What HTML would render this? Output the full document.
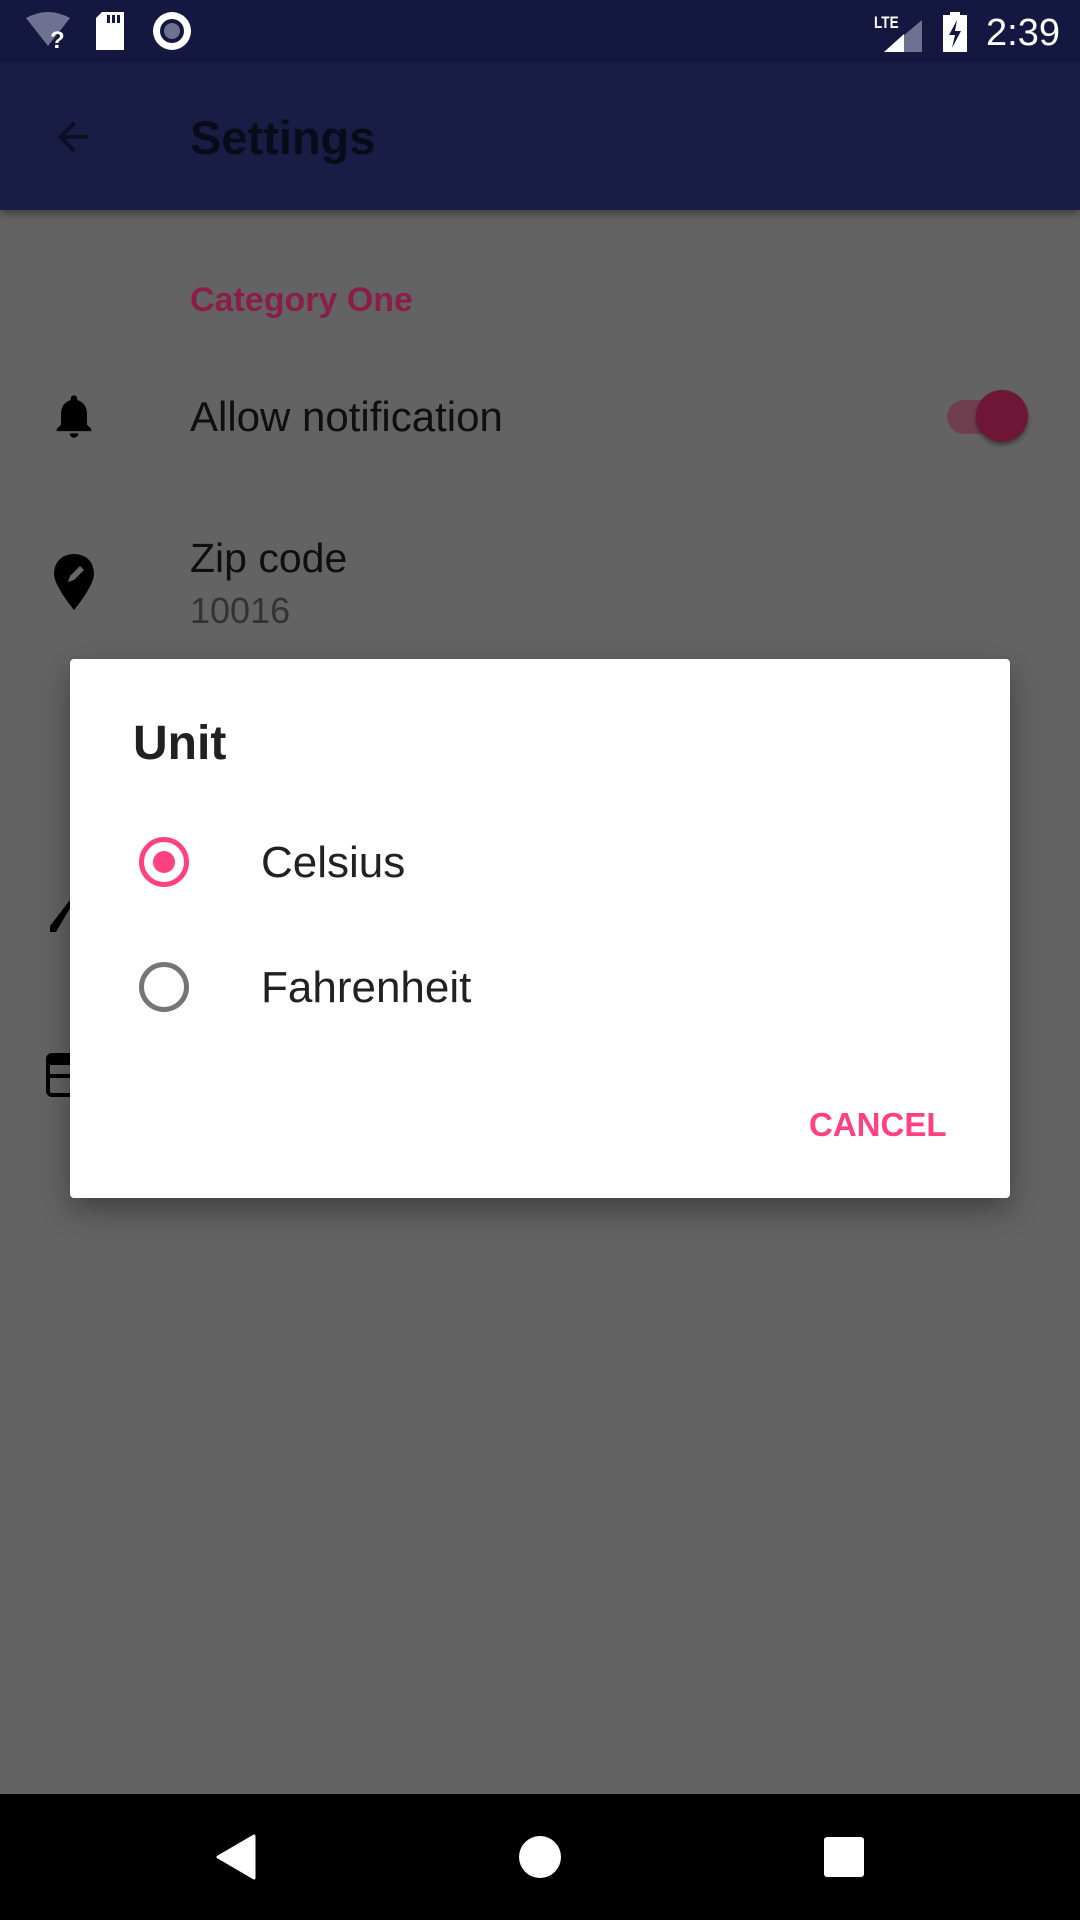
<!DOCTYPE html>
<html><head><meta charset="utf-8"><style>
*{margin:0;padding:0;box-sizing:border-box}
body{width:1080px;height:1920px;position:relative;overflow:hidden;background:#636363;font-family:"Liberation Sans",sans-serif}
.abs{position:absolute}
.t{position:absolute;white-space:nowrap;line-height:1}
</style></head><body>
<div class="abs" style="left:0;top:0;width:1080px;height:62px;background:#141841"></div>
<div class="abs" style="left:0;top:62px;width:1080px;height:148px;background:#191d45;box-shadow:0 4px 8px rgba(0,0,0,.35)"></div>
<svg class="abs" style="left:24px;top:12px" width="50" height="40" viewBox="0 0 50 40"><path d="M2 6 Q24 -6 46 6 L24 34 Z" fill="#6e7190"/><text x="26" y="36" font-size="24" fill="#fff" font-family="Liberation Sans" font-weight="bold">?</text></svg>
<svg class="abs" style="left:94px;top:12px" width="32" height="38"><path d="M8 0 H30 V38 H2 V6 Z" fill="#fff"/><rect x="13" y="3" width="3" height="8" fill="#141841"/><rect x="18" y="3" width="3" height="8" fill="#141841"/><rect x="23" y="3" width="3" height="8" fill="#141841"/></svg>
<svg class="abs" style="left:152px;top:11px" width="40" height="40"><circle cx="20" cy="20" r="19" fill="#fff"/><circle cx="20" cy="20" r="12" fill="#141841"/><circle cx="20" cy="20" r="8" fill="#6e7190"/></svg>
<div class="t" style="left:874px;top:14px;font-size:17px;color:#fff;font-weight:bold;transform:scaleX(.8);transform-origin:left">LTE</div>
<svg class="abs" style="left:884px;top:20px" width="38" height="32"><path d="M38 0 V32 H0 Z" fill="#6e7190"/><path d="M20 14 V32 H0 Z" fill="#fff"/></svg>
<svg class="abs" style="left:943px;top:12px" width="24" height="40"><rect x="7" y="0" width="10" height="4" fill="#fff"/><rect x="0" y="3" width="24" height="37" fill="#fff"/><path d="M14 8 L6 23 H12 L9 36 L18 19 H12 Z" fill="#141841"/></svg>
<div class="t" style="left:986px;top:14px;font-size:38px;color:#fff">2:39</div>
<svg class="abs" style="left:50px;top:114px" width="46" height="46" viewBox="0 0 24 24"><path d="M20 11H7.83l5.59-5.59L12 4l-8 8 8 8 1.41-1.41L7.83 13H20v-2z" fill="#0c0e22"/></svg>
<div class="t" style="left:190px;top:114px;font-size:47px;color:#0a0b18;font-weight:bold">Settings</div>
<div class="t" style="left:190px;top:283px;font-size:34px;color:#8a1e48;font-weight:bold">Category One</div>
<svg class="abs" style="left:48px;top:390px" width="52" height="52" viewBox="0 0 24 24"><path d="M12 22c1.1 0 2-.9 2-2h-4c0 1.1.89 2 2 2zm6-6v-5c0-3.070-1.64-5.64-4.5-6.32V4c0-.83-.67-1.5-1.5-1.5s-1.5.67-1.5 1.5v.68C7.63 5.36 6 7.92 6 11v5l-2 2v1h16v-1l-2-2z" fill="#000"/></svg>
<div class="t" style="left:190px;top:396px;font-size:42px;color:#0f0f0f">Allow notification</div>
<div class="abs" style="left:947px;top:400px;width:56px;height:34px;border-radius:17px;background:#6f3f50"></div>
<div class="abs" style="left:976px;top:390px;width:52px;height:52px;border-radius:50%;background:#6f1636;box-shadow:0 3px 5px rgba(0,0,0,.4)"></div>
<svg class="abs" style="left:50px;top:552px" width="48" height="60" viewBox="0 0 24 30"><path d="M12 1C6 1 2 5 2 11c0 6 10 18 10 18s10-12 10-18C22 5 18 1 12 1z" fill="#000"/><path d="M9 15l1-3 5-5 2 2-5 5z" fill="#666"/></svg>
<div class="t" style="left:190px;top:538px;font-size:41px;color:#0f0f0f">Zip code</div>
<div class="t" style="left:190px;top:593px;font-size:36px;color:#333">10016</div>
<svg class="abs" style="left:48px;top:900px" width="22" height="34"><path d="M22 0 V8 L8 32 H2 V26 Z" fill="#000"/></svg>
<svg class="abs" style="left:46px;top:1053px" width="24" height="44"><rect x="2" y="2" width="30" height="40" rx="4" fill="none" stroke="#000" stroke-width="4"/><rect x="2" y="2" width="30" height="10" fill="#000"/><rect x="2" y="21" width="30" height="4" fill="#000"/></svg>
<div class="abs" style="left:70px;top:659px;width:940px;height:539px;background:#fff;border-radius:4px;box-shadow:0 12px 30px rgba(0,0,0,.35)"></div>
<div class="t" style="left:133px;top:720px;font-size:48px;color:#212121;font-weight:bold">Unit</div>
<div class="abs" style="left:139px;top:837px;width:50px;height:50px;border-radius:50%;border:5px solid #ff4081"></div>
<div class="abs" style="left:153px;top:851px;width:22px;height:22px;border-radius:50%;background:#ff4081"></div>
<div class="t" style="left:261px;top:841px;font-size:44px;color:#212121">Celsius</div>
<div class="abs" style="left:139px;top:962px;width:50px;height:50px;border-radius:50%;border:5px solid #757575"></div>
<div class="t" style="left:261px;top:966px;font-size:44px;color:#212121">Fahrenheit</div>
<div class="t" style="left:809px;top:1108px;font-size:33px;color:#ff4081;font-weight:bold">CANCEL</div>
<div class="abs" style="left:0;top:1794px;width:1080px;height:126px;background:#000"></div>
<svg class="abs" style="left:214px;top:1834px" width="44" height="46"><path d="M40 2 V44 L4 23 Z" fill="#fff" stroke="#fff" stroke-width="3" stroke-linejoin="round"/></svg>
<div class="abs" style="left:519px;top:1836px;width:42px;height:42px;border-radius:50%;background:#fff"></div>
<div class="abs" style="left:824px;top:1837px;width:40px;height:40px;border-radius:3px;background:#fff"></div>
</body></html>
